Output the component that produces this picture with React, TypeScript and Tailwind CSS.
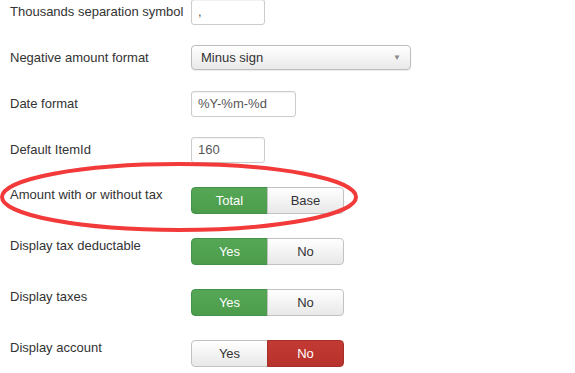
import React from 'react'

const font = { fontFamily: '"Liberation Sans", Arial, sans-serif' }

function TextInput({ value, width }: { value: string; width: string }) {
  return (
    <div
      className={`${width} h-[26px] flex items-center px-[6px] border border-[#cccccc] rounded-[3px] bg-white text-[13px] text-[#555555] shadow-[inset_0_1px_1px_rgba(0,0,0,0.06)]`}
    >
      {value}
    </div>
  )
}

function Toggle({ options, active, tone }: { options: string[]; active: number; tone: 'green' | 'red' }) {
  return (
    <div className="flex h-[27px]">
      {options.map((opt, i) => {
        const on = i === active
        const round = i === 0 ? 'rounded-l-[4px]' : 'rounded-r-[4px] -ml-px'
        const look = on
          ? tone === 'green'
            ? 'bg-gradient-to-b from-[#55a755] to-[#4c9c4c] border-[#43914a] text-white'
            : 'bg-gradient-to-b from-[#c23a33] to-[#b7322b] border-[#a72f29] text-white'
          : 'bg-gradient-to-b from-white to-[#e8e8e8] border-[#c2c2c2] text-[#333333]'
        return (
          <div
            key={opt}
            className={`w-[77px] flex items-center justify-center border text-[13px] ${round} ${look}`}
          >
            {opt}
          </div>
        )
      })}
    </div>
  )
}

function Row({
  label,
  children,
  labelPad,
  className = '',
}: {
  label: string
  children: React.ReactNode
  labelPad: string
  className?: string
}) {
  return (
    <div className={`flex items-start ${className}`}>
      <div className={`w-[191px] pl-[10px] text-[13px] leading-[16px] text-[#333333] ${labelPad}`}>{label}</div>
      {children}
    </div>
  )
}

export default function App() {
  return (
    <div className="relative w-[575px] h-[373px] overflow-hidden bg-white" style={font}>
      <div className="flex flex-col">
        <Row label="Thousands separation symbol" labelPad="pt-[5px]" className="-mt-[1px]">
          <TextInput value="," width="w-[74px]" />
        </Row>

        <Row label="Negative amount format" labelPad="pt-[5px]" className="mt-[20px]">
          <div className="w-[220px] h-[25px] flex items-center justify-between pl-[9px] pr-[9px] border border-[#bdbdbd] rounded-[4px] bg-gradient-to-b from-white to-[#e9e9e9] text-[13px] text-[#333333] shadow-[0_1px_1px_rgba(0,0,0,0.08)]">
            <span>Minus sign</span>
            <span className="text-[8px] text-[#8a8a8a]">▼</span>
          </div>
        </Row>

        <Row label="Date format" labelPad="pt-[5px]" className="mt-[21px]">
          <TextInput value="%Y-%m-%d" width="w-[105px]" />
        </Row>

        <Row label="Default ItemId" labelPad="pt-[5px]" className="mt-[20px]">
          <TextInput value="160" width="w-[74px]" />
        </Row>

        <Row label="Amount with or without tax" labelPad="pt-0" className="mt-[24px]">
          <Toggle options={['Total', 'Base']} active={0} tone="green" />
        </Row>

        <Row label="Display tax deductable" labelPad="pt-0" className="mt-[24px]">
          <Toggle options={['Yes', 'No']} active={0} tone="green" />
        </Row>

        <Row label="Display taxes" labelPad="pt-0" className="mt-[24px]">
          <Toggle options={['Yes', 'No']} active={0} tone="green" />
        </Row>

        <Row label="Display account" labelPad="pt-0" className="mt-[24px]">
          <Toggle options={['Yes', 'No']} active={1} tone="red" />
        </Row>
      </div>

      {/* hand-drawn highlight around the tax row */}
      <svg className="absolute left-0 top-0 pointer-events-none" width="575" height="373">
        <ellipse cx="179" cy="197" rx="177" ry="33" fill="none" stroke="#f23a3a" strokeWidth="4" />
      </svg>
    </div>
  )
}
